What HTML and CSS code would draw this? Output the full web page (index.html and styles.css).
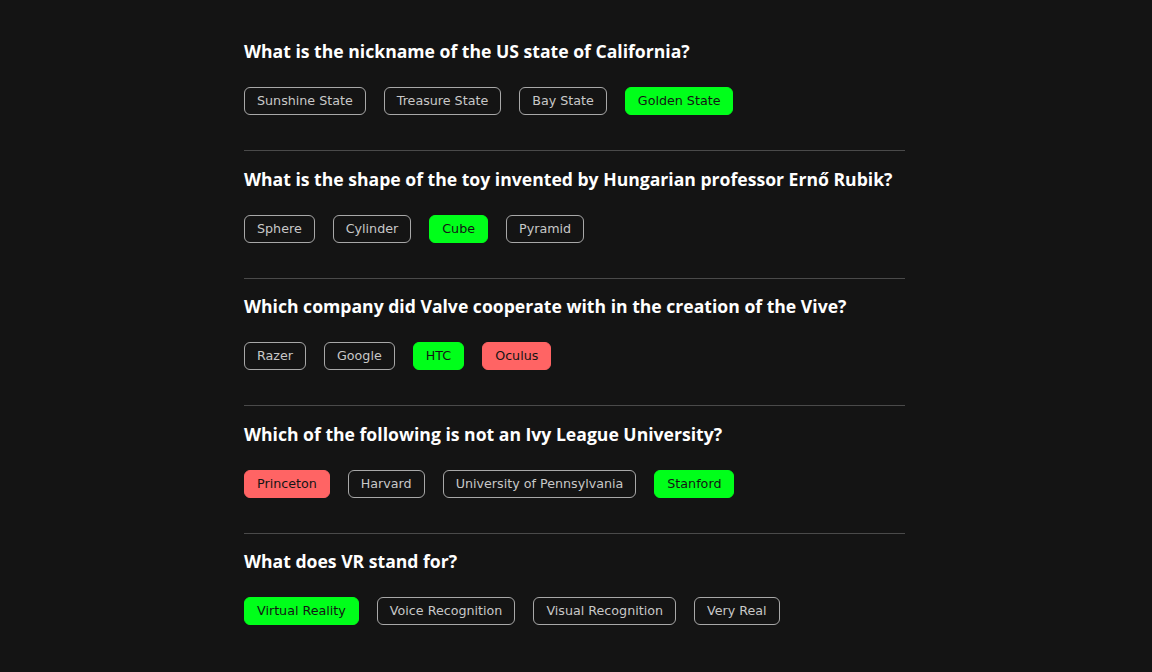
FILE: index.html
```html
<!DOCTYPE html>
<html lang="en">
<head>
<meta charset="utf-8">
<title>Quiz</title>
<link rel="stylesheet" href="styles.css">
</head>
<body>
<main class="quiz">
  <section class="question">
    <h2 class="question-title">What is the nickname of the US state of California?</h2>
    <div class="answers">
      <button class="answer">Sunshine State</button>
      <button class="answer">Treasure State</button>
      <button class="answer">Bay State</button>
      <button class="answer answer-correct">Golden State</button>
    </div>
  </section>
  <section class="question">
    <h2 class="question-title">What is the shape of the toy invented by Hungarian professor Ernő Rubik?</h2>
    <div class="answers">
      <button class="answer">Sphere</button>
      <button class="answer">Cylinder</button>
      <button class="answer answer-correct">Cube</button>
      <button class="answer">Pyramid</button>
    </div>
  </section>
  <section class="question">
    <h2 class="question-title">Which company did Valve cooperate with in the creation of the Vive?</h2>
    <div class="answers">
      <button class="answer">Razer</button>
      <button class="answer">Google</button>
      <button class="answer answer-correct">HTC</button>
      <button class="answer answer-wrong">Oculus</button>
    </div>
  </section>
  <section class="question">
    <h2 class="question-title">Which of the following is not an Ivy League University?</h2>
    <div class="answers">
      <button class="answer answer-wrong">Princeton</button>
      <button class="answer">Harvard</button>
      <button class="answer">University of Pennsylvania</button>
      <button class="answer answer-correct">Stanford</button>
    </div>
  </section>
  <section class="question">
    <h2 class="question-title">What does VR stand for?</h2>
    <div class="answers">
      <button class="answer answer-correct">Virtual Reality</button>
      <button class="answer">Voice Recognition</button>
      <button class="answer">Visual Recognition</button>
      <button class="answer">Very Real</button>
    </div>
  </section>
</main>
</body>
</html>
```
FILE: styles.css
```css
html, body {
  margin: 0;
  padding: 0;
  background: #141414;
}

body {
  font-family: "DejaVu Sans", "Noto Sans", sans-serif;
  color: #ffffff;
}

.quiz {
  width: 661px;
  margin-left: 244px;
  padding-top: 40px;
}

.question {
  padding: 16.5px 0 35px;
  border-bottom: 1px solid #4a4a4a;
}

.question:first-child {
  padding-top: 0;
}

.question:last-child {
  border-bottom: none;
}

.question-title {
  margin: 0 0 25px;
  font-family: "Open Sans", "DejaVu Sans", sans-serif;
  font-size: 17.6px;
  line-height: 22px;
  font-weight: 700;
  color: #ffffff;
  white-space: nowrap;
}

.answers {
  display: flex;
  gap: 18px;
}

.answer {
  height: 28px;
  padding: 0 12px;
  border: 1px solid #a8a8a8;
  border-radius: 6px;
  background: transparent;
  color: #c8c8c8;
  font-family: "DejaVu Sans", "Noto Sans", sans-serif;
  font-size: 12.7px;
  line-height: 26px;
}

.answer-correct {
  background: #00ff1a;
  border-color: #00ff1a;
  color: #141414;
}

.answer-wrong {
  background: #ff6464;
  border-color: #ff6464;
  color: #141414;
}
```
